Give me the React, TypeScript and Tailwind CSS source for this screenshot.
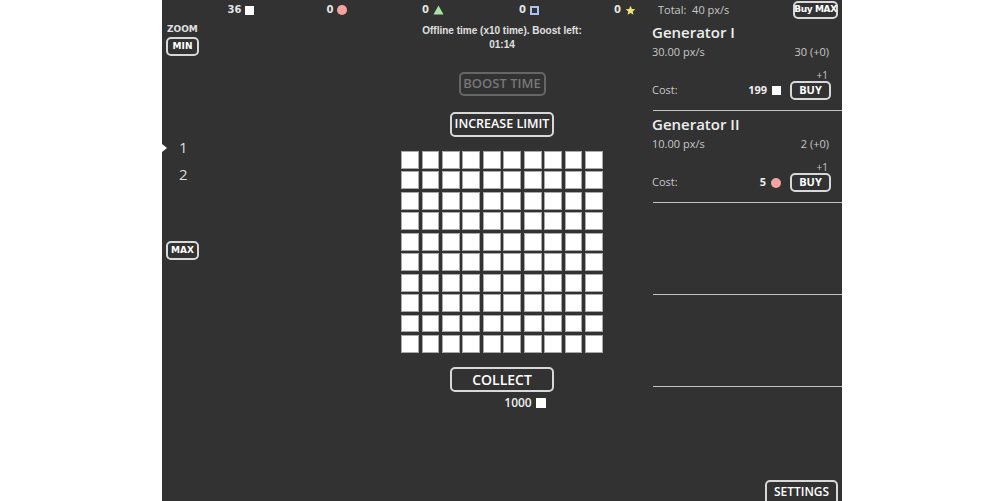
import React from "react";

const bold = { fontFamily: '"DejaVu Sans", Verdana, sans-serif' };
const open = { fontFamily: '"Open Sans", "Noto Sans", sans-serif' };

function Square({ className = "" }: { className?: string }) {
  return <span className={"inline-block w-[9px] h-[9px] bg-white " + className} />;
}

function Star() {
  return (
    <svg width="11" height="11" viewBox="0 0 24 24" className="inline-block">
      <path
        d="M12 1.5l3.1 7 7.4.6-5.6 4.9 1.7 7.4L12 17.5l-6.6 3.9 1.7-7.4L1.5 9.1l7.4-.6z"
        fill="#f3e07a"
      />
    </svg>
  );
}

function Triangle() {
  return (
    <svg width="11" height="10" viewBox="0 0 11 10" className="inline-block">
      <path d="M5.5 0.5L10.5 9.5H0.5z" fill="#a6e3a1" />
    </svg>
  );
}

function Btn({
  children,
  className = "",
  disabled = false,
}: {
  children: React.ReactNode;
  className?: string;
  disabled?: boolean;
}) {
  return (
    <div
      className={
        "flex items-center justify-center border-2 rounded-[5px] whitespace-nowrap " +
        (disabled ? "border-[#666] text-[#777] " : "border-[#d8d8d8] text-white ") +
        className
      }
    >
      {children}
    </div>
  );
}

function Resource({ n, icon }: { n: string; icon: React.ReactNode }) {
  return (
    <div className="w-[96px] shrink-0 flex items-center justify-center gap-[4px]">
      <span className="text-[10px] font-bold text-[#e6e6e6] leading-[20px]" style={bold}>
        {n}
      </span>
      {icon}
    </div>
  );
}

function Generator({
  name,
  rate,
  count,
  cost,
  icon,
}: {
  name: string;
  rate: string;
  count: string;
  cost: string;
  icon: React.ReactNode;
}) {
  return (
    <div className="h-[91px] pt-[3px] pr-[11px] flex flex-col" style={open}>
      <div className="text-[15px] leading-[20px] font-semibold text-[#eeeeee]">{name}</div>
      <div className="mt-[2px] flex justify-between text-[11px] leading-[16px] text-[#c8c8c8] pr-[2px]">
        <span>{rate}</span>
        <span>{count}</span>
      </div>
      <div className="mt-[10px] text-right text-[10px] leading-[10px] text-[#c8c8c8] pr-[3px]">+1</div>
      <div className="mt-[1px] flex items-center h-[19px]">
        <span className="text-[11px] text-[#c8c8c8]">Cost:</span>
        <span className="ml-auto text-[11px] font-bold text-[#eeeeee]">{cost}</span>
        <span className="ml-[5px] flex items-center">{icon}</span>
        <Btn className="ml-[9px] w-[41px] h-[19px] text-[11px] font-bold">
          <span style={open}>BUY</span>
        </Btn>
      </div>
    </div>
  );
}

function Line() {
  return <div className="ml-[1px] h-px bg-[#c4c4c4]" />;
}

export default function App() {
  return (
    <div className="w-full h-[501px] bg-white">
      <div className="ml-[162px] w-[680px] h-[501px] bg-[#323232] overflow-hidden flex">
        {/* left + center */}
        <div className="w-[490px] shrink-0 flex flex-col">
          <div className="h-[20px] pl-[31px] flex">
            <Resource n="36" icon={<Square />} />
            <Resource n="0" icon={<span className="inline-block w-[10px] h-[10px] rounded-full bg-[#f4a3a3]" />} />
            <Resource n="0" icon={<Triangle />} />
            <Resource
              n="0"
              icon={<span className="inline-block w-[9px] h-[9px] border-2 border-[#a9c3f3]" />}
            />
            <Resource n="0" icon={<Star />} />
          </div>
          <div className="flex flex-1">
            {/* left column */}
            <div className="w-[190px] shrink-0 flex flex-col">
              <div className="pl-[5px] mt-[4px] text-[9px] leading-[10px] font-bold text-[#e0e0e0]" style={bold}>
                ZOOM
              </div>
              <div className="pl-[4px] mt-[3px]">
                <Btn className="w-[33px] h-[19px] text-[9px] font-bold">
                  <span style={bold}>MIN</span>
                </Btn>
              </div>
              <div className="mt-[78px] text-[15px] leading-[27px] text-[#dddddd]" style={open}>
                <div className="flex items-center">
                  <span className="w-0 h-0 border-y-[4px] border-y-transparent border-l-[5px] border-l-white" />
                  <span className="ml-[12px]">1</span>
                </div>
                <div className="pl-[17px]">2</div>
              </div>
              <div className="pl-[4px] mt-[53px]">
                <Btn className="w-[33px] h-[19px] text-[9px] font-bold">
                  <span style={bold}>MAX</span>
                </Btn>
              </div>
            </div>
            {/* center column */}
            <div className="w-[300px] shrink-0 flex flex-col items-center">
              <div
                className="mt-[4px] text-center text-[10px] leading-[14px] font-bold text-[#e0e0e0]"
                style={{ fontFamily: '"Liberation Sans", Arial, sans-serif' }}
              >
                <div>Offline time (x10 time). Boost left:</div>
                <div>01:14</div>
              </div>
              <Btn disabled className="mt-[20px] w-[87px] h-[24px] text-[13px] font-semibold">
                <span style={open}>BOOST TIME</span>
              </Btn>
              <Btn className="mt-[16px] w-[104px] h-[25px] text-[12.5px] font-semibold">
                <span style={open}>INCREASE LIMIT</span>
              </Btn>
              <div className="mt-[14px] grid grid-cols-[repeat(10,17.6px)] auto-rows-[17.6px] gap-[2.9px]">
                {Array.from({ length: 100 }).map((_, i) => (
                  <div key={i} className="bg-white border border-[#a8a8a8]" />
                ))}
              </div>
              <Btn className="mt-[14px] w-[104px] h-[25px] text-[14px] font-semibold">
                <span style={open}>COLLECT</span>
              </Btn>
              <div className="mt-[5px] ml-[46px] flex items-center gap-[4px] leading-[12px]" style={open}>
                <span className="text-[12px] font-semibold text-[#eeeeee]">1000</span>
                <span className="inline-block w-[10px] h-[10px] bg-white" />
              </div>
            </div>
          </div>
        </div>
        {/* right column */}
        <div className="w-[190px] shrink-0 flex flex-col">
          <div className="h-[19px] flex items-start">
            <span className="ml-[6px] mt-[2px] text-[11px] leading-[16px] text-[#c8c8c8] whitespace-pre" style={open}>
              {"Total:  40 px/s"}
            </span>
            <Btn className="ml-auto mr-[4px] mt-[1px] w-[45px] h-[18px] text-[9px] font-bold rounded-[4px]">
              <span style={bold} className="tracking-[-0.4px]">Buy MAX</span>
            </Btn>
          </div>
          <Generator name="Generator I" rate="30.00 px/s" count="30 (+0)" cost="199" icon={<Square />} />
          <Line />
          <Generator
            name="Generator II"
            rate="10.00 px/s"
            count="2 (+0)"
            cost="5"
            icon={<span className="inline-block w-[10px] h-[10px] rounded-full bg-[#f4a3a3]" />}
          />
          <Line />
          <div className="h-[91px]" />
          <Line />
          <div className="h-[91px]" />
          <Line />
          <div className="flex-1" />
          <div className="self-end mr-[4px] mb-[-6px]">
            <Btn className="w-[73px] h-[27px] text-[12px] font-semibold">
              <span style={open} className="-mt-[4px]">SETTINGS</span>
            </Btn>
          </div>
        </div>
      </div>
    </div>
  );
}
